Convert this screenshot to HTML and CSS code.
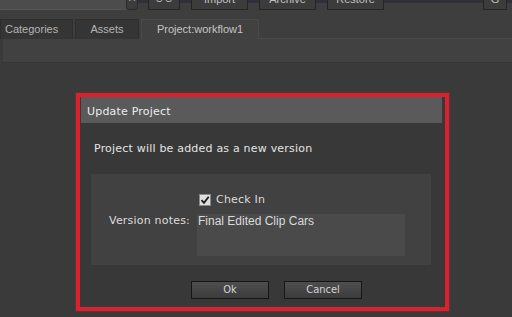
FILE: index.html
```html
<!DOCTYPE html>
<html lang="en">
<head>
    <meta charset="UTF-8">
    <meta name="viewport" content="width=device-width, initial-scale=1.0">
    <title>Update Project</title>
    <link rel="stylesheet" href="styles.css">
</head>
<body>

    <div class="toolbar">
        <div class="search">
            <span class="search-clear">X</span>
        </div>
        <button class="tool-btn btn-view">O O</button>
        <button class="tool-btn btn-wide">Import</button>
        <button class="tool-btn btn-wide">Archive</button>
        <button class="tool-btn btn-wide">Restore</button>
        <div class="spacer"></div>
        <button class="tool-btn btn-small">G</button>
    </div>

    <div class="tabs">
        <div class="tab">Categories</div>
        <div class="tab">Assets</div>
        <div class="tab active">Project:workflow1</div>
        <div class="tab-rest"></div>
    </div>
    <div class="tab-panel"></div>

    <div class="workspace">
        <div class="dialog">
            <div class="dialog-title">Update Project</div>
            <div class="dialog-body">
                <p class="message">Project will be added as a new version</p>

                <div class="options">
                    <div></div>
                    <label class="check-row">
                        <span class="checkbox">
                            <svg width="10" height="10" viewBox="0 0 10 10">
                                <path d="M1.5 5.2 L4 7.8 L8.7 1.8" fill="none" stroke="#1a1a1a" stroke-width="1.8"/>
                            </svg>
                        </span>
                        Check In
                    </label>
                    <div class="field-label">Version notes:</div>
                    <div class="notes">Final Edited Clip Cars</div>
                </div>

                <div class="actions">
                    <button class="dlg-btn">Ok</button>
                    <button class="dlg-btn">Cancel</button>
                </div>
            </div>
        </div>
    </div>

</body>
</html>
```

FILE: styles.css
```css
* {
    margin: 0;
    padding: 0;
    box-sizing: border-box;
}
body {
    font-family: 'Liberation Sans', Arial, sans-serif;
    background-color: #3a3a3a;
    color: #c8c8c8;
    height: 317px;
    overflow: hidden;
}

/* toolbar, mostly scrolled out of view */
.toolbar {
    display: flex;
    align-items: flex-start;
    height: 31px;
    margin-top: -12px;
    background: linear-gradient(#3e3e3e 0, #3e3e3e 12px, #30303a 12px, #30303a 15px, #3e3e3e 15px);
}
.search {
    width: 138px;
    height: 22px;
    background-color: #4c4c4c;
    border-bottom: 1px solid #555;
    position: relative;
}
.search-clear {
    position: absolute;
    right: 0;
    top: 0;
    width: 12px;
    height: 22px;
    background-color: #3c3c3c;
    border: 1px solid #2a2a2a;
    border-radius: 2px;
    font-size: 10px;
    line-height: 18px;
    text-align: center;
    color: #b0b0b0;
}
.tool-btn {
    height: 22px;
    background-color: #3c3c3c;
    border: 1px solid #252525;
    color: #c0c0c0;
    font-family: 'Liberation Sans', Arial, sans-serif;
    font-size: 11px;
    line-height: 16px;
}
.btn-view {
    width: 32px;
    margin-left: 10px;
    font-size: 9px;
}
.btn-wide {
    width: 57px;
    margin-left: 11px;
}
.spacer {
    flex: 1;
}
.btn-small {
    width: 24px;
    margin-right: 5px;
}

/* tabs */
.tabs {
    display: flex;
    height: 20px;
    background-color: #3e3e3e;
}
.tab {
    padding: 0 4px;
    margin-right: 2px;
    background-color: #353535;
    border: 1px solid #2e2e2e;
    border-bottom: none;
    color: #b4b4b4;
    font-size: 11px;
    line-height: 19px;
}
.tab:nth-child(1) {
    width: 73px;
}
.tab:nth-child(2) {
    width: 64px;
    text-align: center;
}
.tab.active {
    width: 118px;
    margin-right: 0;
    background-color: #414141;
    border-color: #4a4a4a;
    color: #c4c4c4;
    text-align: center;
}
.tab-rest {
    flex: 1;
    border-bottom: 1px solid #4a4a4a;
}
.tab-panel {
    height: 24px;
    background-color: #414141;
    border-left: 3px solid #3a3a3a;
    border-bottom: 1px solid #363636;
}

/* dialog */
.workspace {
    padding: 30px 0 0 76px;
}
.dialog {
    width: 373px;
    height: 218px;
    border: 4px solid #d8232e;
    box-shadow: 0 0 2px rgba(230, 40, 50, 0.6);
    background-color: #383838;
    padding: 0 3px 0 1px;
    display: flex;
    flex-direction: column;
    font-family: 'DejaVu Sans', Verdana, sans-serif;
    font-size: 11px;
    letter-spacing: 0.2px;
}
.dialog-title {
    height: 26px;
    background-color: #5a5a5a;
    color: #ececec;
    padding-left: 6px;
    line-height: 29px;
}
.dialog-body {
    flex: 1;
    display: flex;
    flex-direction: column;
}
.message {
    margin: 19px 0 0 13px;
    line-height: 14px;
    color: #e4e4e4;
}
.options {
    display: grid;
    grid-template-columns: 106px 208px;
    grid-template-rows: 20px 42px;
    width: 340px;
    margin: 18px 0 0 10px;
    padding: 20px 0 9px;
    background-color: #414141;
    color: #dcdcdc;
}
.check-row {
    display: flex;
    align-items: flex-start;
    gap: 5px;
    margin-left: 2px;
    line-height: 12px;
}
.checkbox {
    width: 12px;
    height: 12px;
    background-color: #dedede;
    border: 1px solid #8a8a8a;
    display: flex;
    align-items: center;
    justify-content: center;
}
.field-label {
    text-align: right;
    padding-right: 7px;
    line-height: 14px;
}
.notes {
    background-color: #4a4a4a;
    padding: 0 1px;
    font-family: 'Liberation Sans', Arial, sans-serif;
    font-size: 12px;
    letter-spacing: 0;
    color: #dadada;
    line-height: 14px;
}
.actions {
    display: flex;
    gap: 15px;
    margin: 16px 0 0 110px;
}
.dlg-btn {
    width: 78px;
    height: 18px;
    background: linear-gradient(#4e4e4e, #3c3c3c);
    border: 1px solid #161616;
    color: #d4d4d4;
    font-family: 'DejaVu Sans Condensed', 'DejaVu Sans', sans-serif;
    font-size: 11px;
    line-height: 16px;
}
```
